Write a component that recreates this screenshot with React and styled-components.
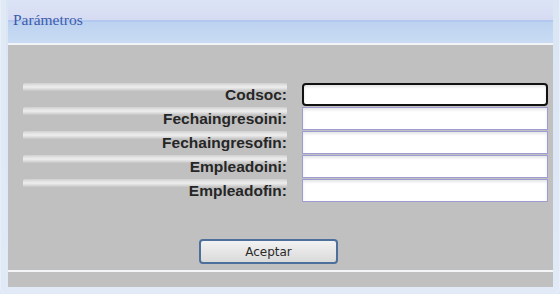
import React from "react";
import styled, { createGlobalStyle } from "styled-components";

const Global = createGlobalStyle`
  html, body { margin: 0; padding: 0; background: #dfe8f6; }
  #root { width: 560px; height: 294px; }
`;

const Window = styled.div`
  width: 560px;
  height: 294px;
  box-sizing: border-box;
  background: linear-gradient(#dbe6f5, #dde7f6 60%, #e2eaf7);
  display: flex;
  flex-direction: column;
  padding: 0 7px 7px 8px;
  box-shadow: inset 1px 0 0 #e9eff9, inset -1px 0 0 #e9eff9, inset 6px 0 0 #e0e9f6;
  border-radius: 0 0 6px 6px;
  overflow: hidden;
`;

const Header = styled.div`
  height: 43px;
  box-sizing: border-box;
  padding-left: 5px;
  background: linear-gradient(
    #dbe5f6 0px,
    #d9e0f4 10px,
    #d6dbf2 20px,
    #b3c8ee 20px,
    #b3c8ee 22px,
    #bdd2f0 22px,
    #c9dcf3 43px
  );
  display: flex;
  align-items: flex-start;
`;

const Title = styled.span`
  font-family: "Liberation Serif", "Times New Roman", serif;
  font-size: 15.5px;
  color: #3a5cae;
  line-height: 17px;
  margin-top: 11px;
`;

const Panel = styled.div`
  height: 227px;
  border-top: 2px solid #f2f4f8;
  background: #c0c0c0;
  box-sizing: border-box;
  display: flex;
  flex-direction: column;
  padding: 38px 5px 0 15px;
`;

const Form = styled.div`
  display: grid;
  grid-template-columns: 264px 246px;
  column-gap: 15px;
  row-gap: 1px;
  grid-auto-rows: 23px;
`;

const Label = styled.label`
  display: flex;
  align-items: flex-end;
  justify-content: flex-end;
  padding-bottom: 2px;
  box-sizing: border-box;
  font-family: "Liberation Sans", Arial, sans-serif;
  font-weight: bold;
  font-size: 15.5px;
  color: #262626;
  background: linear-gradient(
      #cfcfcf 0px,
      #e0e0e0 2px,
      #eeeeee 4px,
      #dcdcdc 6px,
      #c4c4c4 8px,
      transparent 8px
    )
    no-repeat;
  border-radius: 2px 2px 0 0;
`;

const Field = styled.input`
  box-sizing: border-box;
  height: 23px;
  width: 246px;
  margin: 0;
  padding: 2px 4px;
  background: #fff;
  font-family: "Liberation Sans", Arial, sans-serif;
  font-size: 13px;
  border: ${(p) => (p.$focused ? "2px solid #111" : "1px solid #9d9dd2")};
  border-radius: ${(p) => (p.$focused ? "4px" : "0")};
  box-shadow: inset 0 2px 3px rgba(0, 0, 0, 0.1);
  outline: none;
`;

const Button = styled.button`
  margin-top: 37px;
  margin-left: 176px;
  width: 139px;
  height: 25px;
  box-sizing: border-box;
  border: 2px solid #4d6f9c;
  border-radius: 4px;
  background: linear-gradient(#f2f2f2, #e6e6e6 50%, #dadada);
  font-family: "DejaVu Sans", Tahoma, sans-serif;
  font-size: 12px;
  color: #2a2a2a;
  padding: 0;
`;

const Separator = styled.div`
  height: 2px;
  background: #f4f5f7;
`;

const Footer = styled.div`
  height: 15px;
  background: #c0c0c0;
`;

const fields = [
  "Codsoc:",
  "Fechaingresoini:",
  "Fechaingresofin:",
  "Empleadoini:",
  "Empleadofin:",
];

export default function App() {
  return (
    <>
      <Global />
      <Window>
        <Header>
          <Title>Parámetros</Title>
        </Header>
        <Panel>
          <Form>
            {fields.map((f, i) => (
              <React.Fragment key={f}>
                <Label>{f}</Label>
                <Field type="text" $focused={i === 0} />
              </React.Fragment>
            ))}
          </Form>
          <Button>Aceptar</Button>
        </Panel>
        <Separator />
        <Footer />
      </Window>
    </>
  );
}
